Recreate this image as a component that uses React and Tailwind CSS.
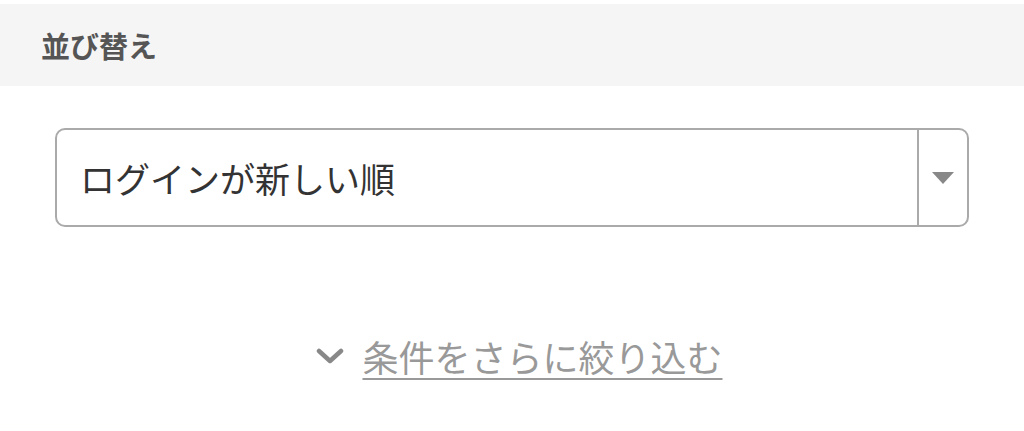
export default function App() {
  return (
    <div
      className="w-[1024px] h-[431px] bg-white overflow-hidden"
      style={{ fontFamily: '"Noto Sans CJK JP", "Noto Sans", sans-serif' }}
    >
      <div className="mt-[4px] h-[82px] bg-[#f5f5f5] flex items-center pl-[41px]">
        <h2 className="text-[29px] font-bold text-[#555555] leading-none">並び替え</h2>
      </div>

      <div className="px-[55px] pt-[42px]">
        <div className="h-[99px] w-[914px] border-2 border-[#aaaaaa] rounded-[10px] flex items-stretch">
          <div className="flex-1 flex items-center pl-[23px] text-[35px] text-[#333333] leading-none">
            ログインが新しい順
          </div>
          <div className="w-[50px] border-l-2 border-[#aaaaaa] flex items-center justify-center">
            <svg width="22" height="12" viewBox="0 0 22 12">
              <polygon points="0,0 22,0 11,12" fill="#888888" />
            </svg>
          </div>
        </div>
      </div>

      <div className="flex justify-center items-center gap-[18px] mt-[111px] pl-[15px]">
        <svg width="28" height="16" viewBox="0 0 28 16">
          <polyline points="3,3 14,13 25,3" fill="none" stroke="#888888" strokeWidth="4.5" strokeLinecap="round" strokeLinejoin="round" />
        </svg>
        <a className="text-[36px] text-[#999999] underline underline-offset-[6px] decoration-2 leading-none">
          条件をさらに絞り込む
        </a>
      </div>
    </div>
  )
}
